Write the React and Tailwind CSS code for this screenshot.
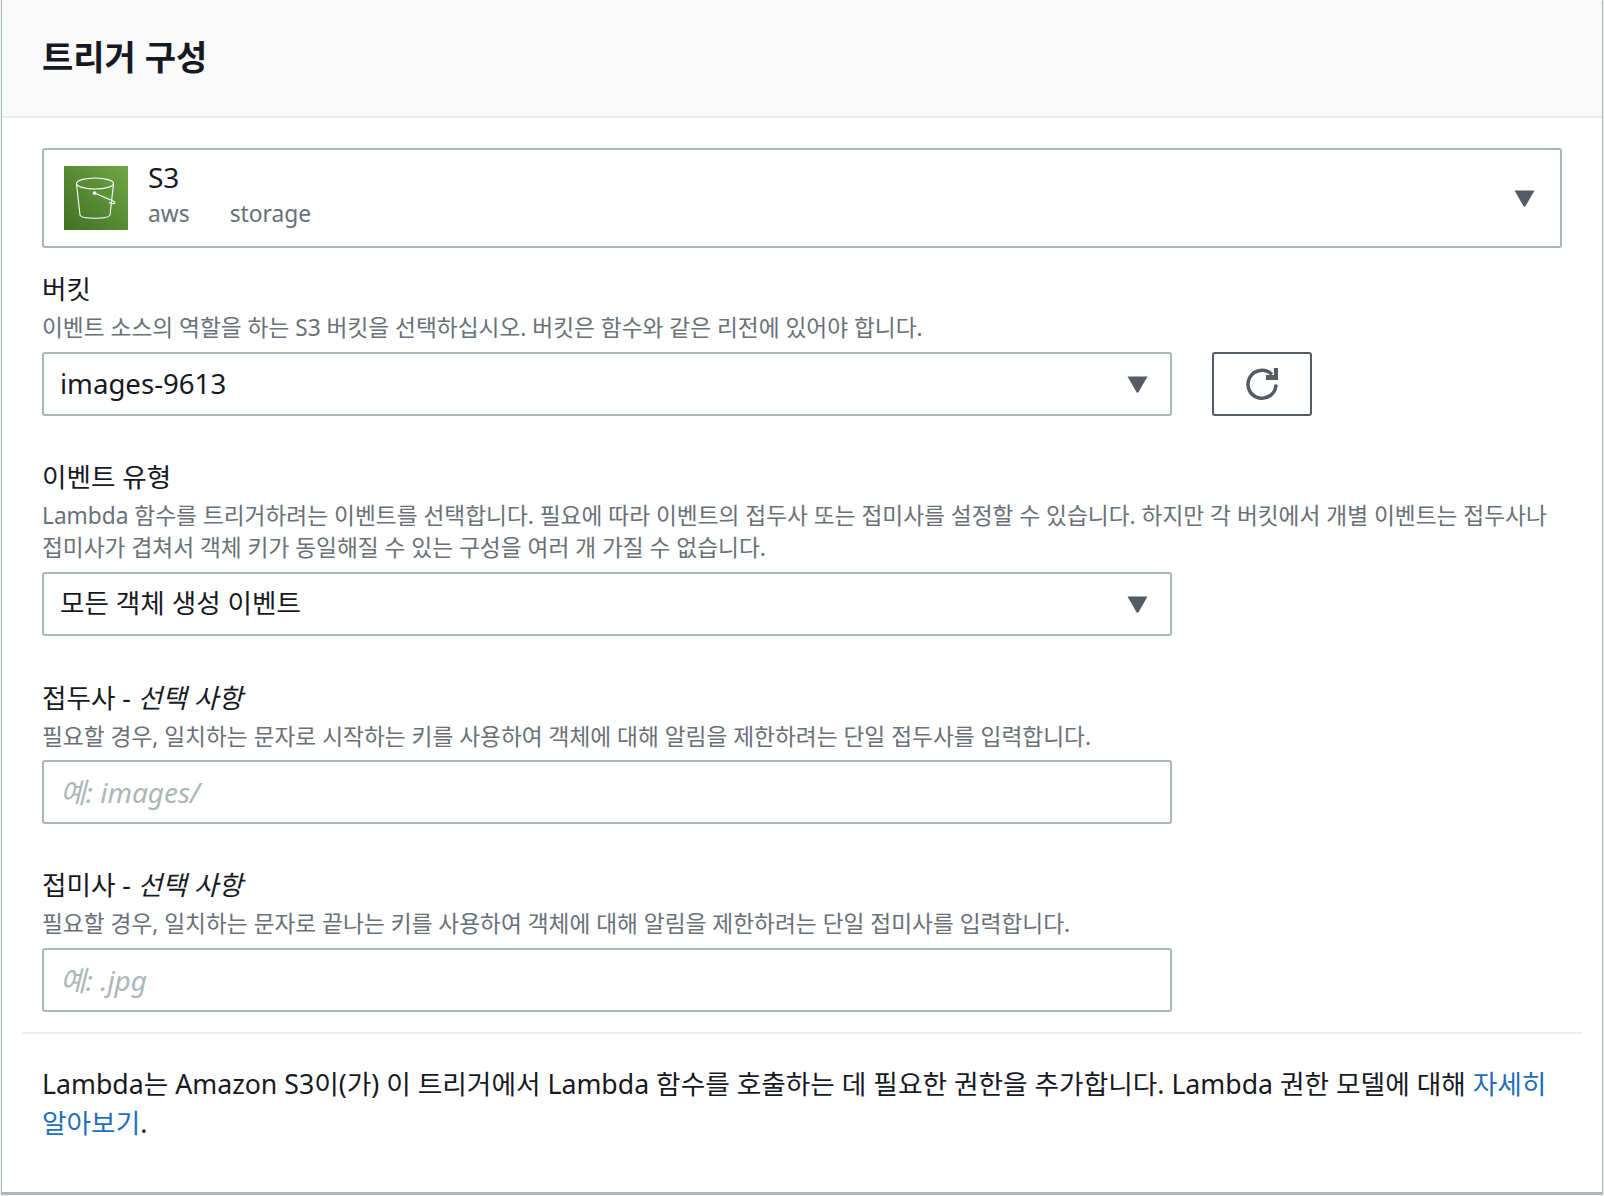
import React from 'react';

const FONT = 'font-["Noto_Sans","Noto_Sans_CJK_KR",sans-serif]';

function Caret({ className = '' }) {
  return (
    <svg width="21" height="17" viewBox="0 0 21 17" className={className}>
      <path d="M.5 .5h20L11.600 16a1.200 1.200 0 0 1-2.200 0Z" fill="#545b64" />
    </svg>
  );
}

function BucketIcon() {
  return (
    <div className="w-16 h-16 shrink-0 bg-gradient-to-tr from-[#3f7123] to-[#71a646] flex items-center justify-center">
      <svg width="64" height="64" viewBox="0 0 64 64" fill="none" stroke="#fff" strokeWidth="1.100">
        <ellipse cx="31" cy="17.500" rx="18.500" ry="5.500" />
        <path d="M12.500 18 16 49c.4 2 7 3.200 15 3.200S45.600 51 46 49l3.500-31" />
        <path d="M30.500 27 49 35c2.500 1.300 2.300 2.700.300 2.600-2-.1-3.300-.6-4.300-1.300" />
        <circle cx="30.500" cy="27" r="1.300" fill="#fff" />
      </svg>
    </div>
  );
}

function Field({ label, optional, desc, children, className = '', descGap = 'mb-[8px]' }) {
  return (
    <div className={className}>
      <div className="text-[26.6px] leading-[36px] text-[#16191f]">
        {label}
        {optional && <> - <i>{optional}</i></>}
      </div>
      <p className={`text-[22.7px] leading-[32px] mt-[5px] ${descGap} text-[#687078] break-keep`}>{desc}</p>
      {children}
    </div>
  );
}

function SelectBox({ value, size = 'text-[26.6px]' }) {
  return (
    <div className={`w-[1130px] h-[64px] border-2 border-[#aab7b8] rounded-[3px] flex items-center justify-between pl-[16px] pr-[22px] ${size} text-[#16191f]`}>
      <span>{value}</span>
      <Caret />
    </div>
  );
}

function TextBox({ placeholder }) {
  return (
    <div className="w-[1130px] h-[64px] border-2 border-[#aab7b8] rounded-[3px] flex items-center pl-[16px] text-[28px] italic text-[#aab7b8]">
      {placeholder}
    </div>
  );
}

export default function App() {
  return (
    <div className={`${FONT} w-[1604px] h-[1196px] bg-white`}>
      <div className="w-[1602px] h-[1194px] ml-px border-l-[1px] border-r-[1px] border-b-2 border-[#aab7b8] shadow-[0_1px_1px_0_rgba(0,28,36,0.3)]">
        <div className="h-[118px] bg-[#fafafa] border-b-2 border-[#eaeded] pl-[40px] pt-[32px]">
          <h1 className="text-[34px] leading-[50px] font-bold text-[#16191f]">트리거 구성</h1>
        </div>

        <div className="px-[40px] pt-[30px]">
          <div className="w-[1520px] h-[100px] border-2 border-[#aab7b8] rounded-[3px] flex items-center pl-[20px] pr-[25px]">
            <BucketIcon />
            <div className="ml-[20px] flex-1 -mt-[6px]">
              <div className="text-[28px] leading-[36px] text-[#16191f]">S3</div>
              <div className="mt-[2px] text-[22.8px] leading-[34px] text-[#687078] flex gap-[40px]">
                <span>aws</span>
                <span>storage</span>
              </div>
            </div>
            <Caret />
          </div>

          <Field label="버킷" desc="이벤트 소스의 역할을 하는 S3 버킷을 선택하십시오. 버킷은 함수와 같은 리전에 있어야 합니다." className="mt-[23px]">
            <div className="flex gap-[40px]">
              <SelectBox value="images-9613" size="text-[27.6px]" />
              <div className="w-[100px] h-[64px] border-2 border-[#545b64] rounded-[3px] flex items-center justify-center">
                <svg width="34" height="34" viewBox="0 0 34 34" fill="none">
                  <path d="M31 17.500A14 14 0 1 1 27 7.500" stroke="#545b64" strokeWidth="3.500" />
                  <path d="M21 8h8V1h4v12H21Z" fill="#545b64" />
                </svg>
              </div>
            </div>
          </Field>

          <Field label="이벤트 유형" desc="Lambda 함수를 트리거하려는 이벤트를 선택합니다. 필요에 따라 이벤트의 접두사 또는 접미사를 설정할 수 있습니다. 하지만 각 버킷에서 개별 이벤트는 접두사나 접미사가 겹쳐서 객체 키가 동일해질 수 있는 구성을 여러 개 가질 수 없습니다." className="mt-[43px]" descGap="mb-[8px]">
            <SelectBox value="모든 객체 생성 이벤트" />
          </Field>

          <Field label="접두사" optional="선택 사항" desc="필요할 경우, 일치하는 문자로 시작하는 키를 사용하여 객체에 대해 알림을 제한하려는 단일 접두사를 입력합니다." className="mt-[44px]" descGap="mb-[7px]">
            <TextBox placeholder="예: images/" />
          </Field>

          <Field label="접미사" optional="선택 사항" desc="필요할 경우, 일치하는 문자로 끝나는 키를 사용하여 객체에 대해 알림을 제한하려는 단일 접미사를 입력합니다." className="mt-[43px]">
            <TextBox placeholder="예: .jpg" />
          </Field>
        </div>

        <div className="mx-[20px] mt-[20px] h-[2px] bg-[#eaeded]" />

        <p className="px-[40px] pt-[30px] text-[26.7px] leading-[39px] text-[#16191f] break-keep">
          Lambda는 Amazon S3이(가) 이 트리거에서 Lambda 함수를 호출하는 데 필요한 권한을 추가합니다. Lambda 권한 모델에 대해{' '}
          <a className="text-[#1f6fb8]" href="#">자세히 알아보기</a>.
        </p>
      </div>
    </div>
  );
}
